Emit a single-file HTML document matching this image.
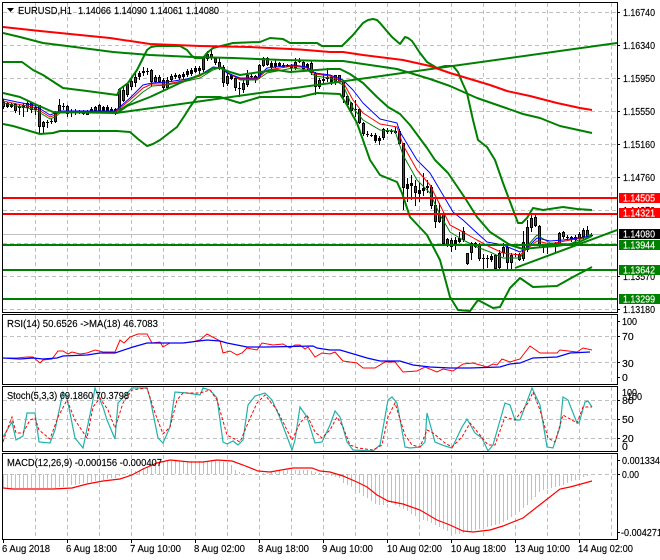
<!DOCTYPE html>
<html><head><meta charset="utf-8"><style>
html,body{margin:0;padding:0;background:#fff;width:660px;height:560px;overflow:hidden}
svg{display:block}
text{font-family:"Liberation Sans",sans-serif;font-size:10.5px;fill:#000;stroke:#000;stroke-width:.15px}
text.w{fill:#fff;stroke:#fff}
</style></head><body>
<svg width="660" height="560" viewBox="0 0 660 560" xmlns="http://www.w3.org/2000/svg">
<defs><clipPath id="c1"><rect x="3" y="3" width="614" height="309"/></clipPath></defs>
<!-- grid -->
<g stroke="#c0c0c0" stroke-width="1" stroke-dasharray="4 3" fill="none" shape-rendering="crispEdges">
<path d="M35.5 3V312M67.5 3V312M99.5 3V312M131.5 3V312M163.5 3V312M195.5 3V312M227.5 3V312M259.5 3V312M291.5 3V312M323.5 3V312M355.5 3V312M387.5 3V312M419.5 3V312M451.5 3V312M483.5 3V312M515.5 3V312M547.5 3V312M579.5 3V312M611.5 3V312"/>
<path d="M3 12.5H617M3 45.5H617M3 78.5H617M3 111.5H617M3 144.5H617M3 177.5H617M3 210.5H617M3 243.5H617M3 276.5H617M3 309.5H617"/>
<path d="M35.5 315V384M67.5 315V384M99.5 315V384M131.5 315V384M163.5 315V384M195.5 315V384M227.5 315V384M259.5 315V384M291.5 315V384M323.5 315V384M355.5 315V384M387.5 315V384M419.5 315V384M451.5 315V384M483.5 315V384M515.5 315V384M547.5 315V384M579.5 315V384M611.5 315V384"/>
<path d="M3 336.5H617M3 362.5H617"/>
<path d="M35.5 387V451M67.5 387V451M99.5 387V451M131.5 387V451M163.5 387V451M195.5 387V451M227.5 387V451M259.5 387V451M291.5 387V451M323.5 387V451M355.5 387V451M387.5 387V451M419.5 387V451M451.5 387V451M483.5 387V451M515.5 387V451M547.5 387V451M579.5 387V451M611.5 387V451"/>
<path d="M3 400.5H617M3 419.5H617M3 438.5H617"/>
<path d="M35.5 455V539M67.5 455V539M99.5 455V539M131.5 455V539M163.5 455V539M195.5 455V539M227.5 455V539M259.5 455V539M291.5 455V539M323.5 455V539M355.5 455V539M387.5 455V539M419.5 455V539M451.5 455V539M483.5 455V539M515.5 455V539M547.5 455V539M579.5 455V539M611.5 455V539"/>
<path d="M3 474.5H617"/>
</g>
<!-- current price -->
<path d="M3 234.5H617" stroke="#c0c0c0" stroke-width="1" shape-rendering="crispEdges"/>
<g clip-path="url(#c1)" shape-rendering="crispEdges" fill="none">
<!-- wicks -->
<path stroke="#000" stroke-width="1" d="M3.5 99V109M7.5 102V108M11.5 103V108M15.5 103V113M19.5 104V115M23.5 103V117M27.5 100V112M31.5 102V113M35.5 105V115M39.5 105V133M43.5 121V133M47.5 120V128M51.5 119V124M55.5 111V123M59.5 99V113M63.5 103V110M67.5 105V117M71.5 109V117M75.5 109V115M79.5 110V114M83.5 110V115M87.5 110V115M91.5 107V113M95.5 106V113M99.5 104V112M103.5 106V113M107.5 105V112M111.5 107V112M115.5 108V115M119.5 88V112M123.5 86V102M127.5 83V97M131.5 78V90M135.5 73V87M139.5 71V80M143.5 67V76M147.5 68V75M151.5 69V87M155.5 75V83M159.5 75V83M163.5 78V90M167.5 77V90M171.5 74V82M175.5 73V79M179.5 74V80M183.5 72V79M187.5 69V77M191.5 68V76M195.5 66V73M199.5 66V74M203.5 57V72M207.5 51V61M211.5 50V60M215.5 57V65M219.5 57V70M223.5 65V87M227.5 73V86M231.5 74V80M235.5 77V91M239.5 82V97M243.5 78V93M247.5 70V87M251.5 74V80M255.5 75V83M259.5 64V79M263.5 57V67M267.5 57V66M271.5 61V70M275.5 60V68M279.5 62V67M283.5 63V68M287.5 64V67M291.5 64V73M295.5 58V70M299.5 58V63M303.5 60V71M307.5 63V71M311.5 61V75M315.5 72V95M319.5 78V89M323.5 75V85M327.5 68V82M331.5 75V85M335.5 75V85M339.5 75V83M343.5 80V103M347.5 95V106M351.5 102V112M355.5 100V117M359.5 108V124M363.5 122V136M367.5 131V137M371.5 133V137M375.5 133V143M379.5 136V145M383.5 128V140M387.5 128V134M391.5 129V134M395.5 127V134M399.5 129V145M403.5 143V210M407.5 178V202M411.5 175V200M415.5 180V206M419.5 183V202M423.5 173V196M427.5 180V193M431.5 185V209M435.5 199V228M439.5 203V223M443.5 212V246M447.5 238V247M451.5 238V252M455.5 237V250M459.5 232V243M463.5 227V242M467.5 253V265M471.5 242V260M475.5 242V248M479.5 243V261M483.5 254V269M487.5 255V268M491.5 254V262M495.5 254V271M499.5 250V269M503.5 243V257M507.5 246V269M511.5 253V271M515.5 253V257M519.5 253V261M523.5 231V261M527.5 220V252M531.5 213V232M535.5 214V227M539.5 225V247M543.5 244V253M547.5 243V254M551.5 243V247M555.5 242V253M559.5 232V245M563.5 231V239M567.5 235V240M571.5 236V242M575.5 235V245M579.5 232V242M583.5 228V239M587.5 226V239M591.5 233V237"/>
<!-- bodies -->
<path stroke="#000" stroke-width="3" d="M3.5 102V107M7.5 103V107M11.5 104V107M15.5 104V111M19.5 106V108M23.5 105V108M27.5 103V108M31.5 103V110M35.5 107V110M39.5 105V127M43.5 122V127M47.5 122V123M51.5 121V122M55.5 113V122M59.5 105V112M63.5 106V107M67.5 106V114M71.5 111V113M75.5 111V113M79.5 112V113M83.5 112V114M87.5 111V115M91.5 109V111M95.5 107V111M99.5 105V111M103.5 107V111M107.5 107V111M111.5 109V111M115.5 109V113M119.5 89V110M123.5 90V101M127.5 84V95M131.5 81V87M135.5 77V83M139.5 73V77M143.5 71V73M147.5 71V72M151.5 70V82M155.5 77V82M159.5 77V82M163.5 80V88M167.5 80V88M171.5 76V80M175.5 75V77M179.5 75V78M183.5 74V77M187.5 71V75M191.5 70V74M195.5 68V72M199.5 68V71M203.5 58V70M207.5 54V59M211.5 54V58M215.5 58V63M219.5 62V68M223.5 67V83M227.5 76V84M231.5 75V79M235.5 78V88M239.5 88V89M243.5 83V90M247.5 75V85M251.5 76V77M255.5 76V78M259.5 65V77M263.5 58V66M267.5 58V65M271.5 63V67M275.5 63V67M279.5 63V66M283.5 65V67M287.5 65V67M291.5 66V68M295.5 62V68M299.5 61V62M303.5 62V69M307.5 64V68M311.5 63V73M315.5 73V87M319.5 80V87M323.5 79V81M327.5 77V79M331.5 77V83M335.5 75V83M339.5 75V82M343.5 81V97M347.5 96V105M351.5 103V111M355.5 109V110M359.5 109V123M363.5 123V134M367.5 134V135M371.5 135V136M375.5 135V141M379.5 138V141M383.5 129V138M387.5 131V132M391.5 131V132M395.5 131V133M399.5 131V144M403.5 143V188M407.5 184V189M411.5 183V186M415.5 186V193M419.5 190V194M423.5 188V191M427.5 186V188M431.5 187V206M435.5 205V222M439.5 213V222M443.5 213V244M447.5 239V245M451.5 240V247M455.5 240V246M459.5 238V242M463.5 231V240M467.5 253V264M471.5 243V253M475.5 243V247M479.5 245V259M483.5 258V259M487.5 258V259M491.5 256V260M495.5 255V269M499.5 253V268M503.5 247V253M507.5 247V263M511.5 255V263M515.5 254V255M519.5 254V260M523.5 242V259M527.5 227V250M531.5 218V228M535.5 217V226M539.5 226V245M543.5 245V247M547.5 244V247M551.5 244V246M555.5 243V246M559.5 233V244M563.5 232V237M567.5 237V238M571.5 237V240M575.5 237V240M579.5 234V239M583.5 230V237M587.5 230V237M591.5 235V236"/>
<!-- inner red -->
<path stroke="#f00" stroke-width="1" d="M15.5 105V110M31.5 104V109M39.5 106V126M43.5 123V126M67.5 107V113M151.5 71V81M155.5 78V81M163.5 81V87M179.5 76V77M211.5 55V57M215.5 59V62M219.5 63V67M223.5 68V82M235.5 79V87M255.5 77V78M267.5 59V64M303.5 63V68M311.5 64V72M315.5 74V86M343.5 82V96M347.5 97V104M351.5 104V110M359.5 110V122M363.5 124V133M399.5 132V143M403.5 144V187M415.5 187V192M431.5 188V205M435.5 206V221M443.5 214V243M451.5 241V246M475.5 244V246M479.5 246V258M495.5 256V268M507.5 248V262M519.5 255V259M535.5 218V225M539.5 227V244M563.5 233V236M587.5 231V236"/>
<!-- inner green -->
<path stroke="#008000" stroke-width="1" d="M3.5 103V106M27.5 104V107M55.5 114V121M59.5 106V111M87.5 112V114M95.5 108V110M99.5 106V110M119.5 90V109M123.5 91V100M127.5 85V94M131.5 82V86M135.5 78V82M159.5 78V81M167.5 81V87M171.5 77V79M203.5 59V69M207.5 55V58M227.5 77V83M243.5 84V89M247.5 76V84M259.5 66V76M263.5 59V65M295.5 63V67M319.5 81V86M335.5 76V82M339.5 76V81M383.5 130V137M439.5 214V221M447.5 240V244M463.5 232V239M467.5 254V263M471.5 244V252M499.5 254V267M503.5 248V252M511.5 256V262M523.5 243V258M527.5 228V249M531.5 219V227M559.5 234V243M579.5 235V238M583.5 231V236"/>
</g>
<g clip-path="url(#c1)" fill="none" stroke-linejoin="round">
<!-- MAs thin -->
<polyline stroke="#008000" stroke-width="1" points="3,103 17,106 33,109 42,114 50,119 55,117 60,113 115,112 122,108 130,103 143,92 152,86 167,85 187,81 200,78 213,70 222,67 227,72 240,80 257,80 267,73 293,68 307,70 315,76 330,78 343,85 353,108 363,120 380,130 395,131 403,155 417,180 430,193 440,215 450,232 463,240 477,247 490,252 503,258 520,258 528,245 537,235 550,243 570,244 592,234"/>
<polyline stroke="#f00" stroke-width="1" points="3,101 17,104 33,107 42,112 50,117 55,115 60,112 115,112 130,100 143,88 152,84 167,84 187,80 200,76 213,68 222,68 227,73 240,79 257,79 267,70 293,66 307,68 315,74 330,76 343,82 353,100 363,113 380,124 397,127 403,145 417,170 430,185 440,205 450,225 463,232 477,240 490,247 503,253 520,255 528,248 537,241 550,244 565,241 592,236"/>
<polyline stroke="#00f" stroke-width="1" points="3,99 17,102 33,105 42,110 50,115 55,113 60,111 115,111 130,98 143,85 152,83 167,82 187,79 200,75 213,67 222,68 227,73 240,78 257,78 267,68 293,65 307,67 315,73 330,75 343,80 353,90 363,103 380,119 397,123 400,132 417,160 430,173 443,195 453,212 463,220 477,233 487,242 503,245 520,252 530,245 537,238 550,241 563,240 592,236"/>
<!-- thick -->
<g stroke="#008000" stroke-width="2">
<polyline points="3,33 20,37 43,43 67,46 113,52 150,55 193,57 233,58 283,60 330,61 343,61 363,64 397,69 430,79 450,86 477,98 503,107 523,114 540,118 560,126 592,133"/>
<polyline points="116,113 617,43"/>
<polyline points="515,268 617,230"/>
<polyline points="3,62 22,62 33,70 43,75 63,88 87,91 117,95 120,89 128,83 137,70 142,60 147,50 151,47 157,46 180,46 187,50 192,56 195,58 203,58 207,53 213,48 233,43 260,42 270,38 283,39 290,43 317,43 322,46 342,46 347,41 353,35 358,29 363,23 368,20 373,19 377,20 380,23 392,37 400,44 405,37 408,38 412,41 420,53 427,62 437,68 445,66 453,66 458,72 462,82 467,93 473,120 478,140 487,147 495,160 503,183 512,207 518,223 522,223 527,218 533,208 543,210 563,207 577,209 592,210"/>
<polyline points="3,93 20,97 37,105 53,112 117,113 127,106 150,97 180,83 207,72 213,68 220,68 230,72 240,75 260,72 277,70 290,72 330,69 340,69 350,74 363,83 377,97 388,107 400,114 410,125 427,148 435,160 448,173 465,198 477,217 490,232 510,245 523,249 543,247 557,246 577,243 592,236"/>
<polyline points="3,124 13,126 40,134 53,133 60,131 117,131 130,132 138,139 147,146 153,144 160,140 177,127 185,115 190,107 197,97 220,97 240,103 260,97 300,97 317,93 340,94 347,105 357,123 370,160 380,175 397,182 402,193 410,217 427,235 440,260 450,297 458,310 470,311 478,300 493,308 500,307 510,288 520,278 533,287 557,286 573,277 592,267"/>
</g>
<polyline stroke="#f00" stroke-width="2" points="3,27 40,31 80,35 110,38 150,44 200,46 250,47 300,49.500 330,52 343,52 363,55 387,58 403,60 430,66 450,73 470,79 490,85 507,91 530,96 557,103 580,108 592,110"/>
</g>
<!-- levels -->
<g shape-rendering="crispEdges">
<rect x="3" y="197" width="614" height="2" fill="#f00"/>
<rect x="3" y="213" width="614" height="2" fill="#f00"/>
<rect x="3" y="244" width="614" height="2" fill="#008000"/>
<rect x="3" y="269" width="614" height="2" fill="#008000"/>
<rect x="3" y="298" width="614" height="2" fill="#008000"/>
</g>
<!-- RSI -->
<polyline fill="none" stroke="#f00" stroke-width="1" points="3,358 10,358 17,358 27,357 33,357 40,363 43,360 52,359 58,351 63,351 68,354 72,352 80,354 87,353 95,350 103,352 115,352 120,340 124,343 130,337 138,334 147,334 152,343 160,342 163,347 170,343 183,343 192,342 200,340 207,334 220,341 223,353 230,351 237,355 242,353 247,348 257,350 262,343 273,345 283,344 290,348 295,345 300,345 305,349 308,347 315,357 322,353 330,354 335,352 343,361 350,362 357,363 363,368 375,368 385,362 395,362 403,372 417,371 425,367 437,372 443,369 453,371 463,364 473,363 487,367 493,364 497,365 502,359 510,362 520,359 530,346 540,353 557,353 560,350 577,352 583,348 592,350"/>
<polyline fill="none" stroke="#00f" stroke-width="1.2" points="3,358 20,359 33,358 43,359 57,358 63,356 87,355 100,353 115,353 133,347 147,343 183,343 207,340 220,341 227,343 247,347 267,347 313,346 317,348 330,350 340,350 357,355 367,358 380,361 400,361 413,365 430,367 450,368 470,368 500,367 510,364 520,363 533,358 557,357 570,353 590,352"/>
<!-- Stoch -->
<polyline fill="none" stroke="#20b2aa" stroke-width="1.2" points="3,437 12,422 16,440 23,436 27,413 35,413 39,442 50,443 55,430 63,392 67,398 75,438 83,448 92,405 95,388 103,407 107,420 115,439 118,403 132,388 147,388 150,398 158,438 163,443 170,427 175,392 187,393 200,395 203,388 210,390 217,398 223,442 227,444 233,441 238,445 243,440 248,405 255,396 265,393 272,400 280,418 292,450 295,440 300,407 307,417 315,443 322,442 330,425 335,411 340,417 347,442 353,450 373,451 380,445 388,400 392,397 397,403 405,447 410,448 420,447 425,442 427,413 435,442 445,446 452,448 462,427 467,419 475,433 482,438 488,451 493,445 505,403 510,405 515,420 520,420 532,388 540,405 547,447 553,448 560,427 563,397 568,400 577,423 579,423 585,402 588,401 592,407"/>
<polyline fill="none" stroke="#f00" stroke-width="1" stroke-dasharray="3 2" points="3,442 7,430 12,417 16,433 23,433 30,420 35,418 39,430 50,439 58,417 67,400 75,420 87,438 93,407 100,398 108,410 115,428 123,403 132,390 147,388 155,413 163,434 170,427 177,400 183,393 200,393 210,390 217,400 227,435 240,442 248,423 257,403 265,395 277,410 292,440 300,423 307,415 315,432 322,438 330,430 337,417 343,427 350,445 358,448 373,450 382,445 388,417 395,403 405,435 412,445 420,447 427,430 433,433 445,443 452,447 462,437 470,423 480,435 488,445 495,445 505,417 515,420 528,403 533,392 540,410 548,438 555,442 563,415 577,423 583,407 592,407"/>
<!-- MACD hist -->
<path fill="none" stroke="#c0c0c0" stroke-width="1" shape-rendering="crispEdges" d="M3.5 474V488M7.5 474V488M11.5 474V488M15.5 474V488M19.500 474V488M23.5 474V488M27.5 474V488M31.5 474V488M35.5 474V488M39.5 474V488M43.5 474V488M47.5 474V488M51.5 474V488M55.5 474V488M59.5 474V487M63.5 474V487M67.5 474V486M71.5 474V485M75.5 474V485M79.5 474V484M83.5 474V483M87.5 474V483M91.5 474V482M95.5 474V481M99.5 474V481M103.5 474V480M107.5 474V479M111.5 474V478M115.5 474V478M119.5 474V476M123.5 474V475M127.5 473V474M131.5 473V474M135.5 471V474M139.5 470V474M143.5 468V474M147.5 467V474M151.5 465V474M155.5 464V474M159.5 463V474M163.5 462V474M167.5 461V474M171.5 461V474M175.5 461V474M179.5 461V474M183.5 461V474M187.5 461V474M191.5 461V474M195.5 461V474M199.5 461V474M203.5 461V474M207.5 461V474M211.5 461V474M215.5 461V474M219.5 461V474M223.5 462V474M227.5 463V474M231.5 465V474M235.5 470V474M239.5 472V474M243.5 473V474M263.5 473V474M267.5 473V474M271.5 472V474M275.5 472V474M279.5 471V474M283.5 471V474M287.5 470V474M291.5 470V474M295.5 470V474M299.5 470V474M303.5 470V474M307.5 470V474M311.5 471V474M315.5 472V474M319.5 473V474M323.5 473V474M331.5 474V476M335.5 474V477M339.5 474V478M343.5 474V483M347.5 474V485M351.5 474V487M355.5 474V490M359.5 474V493M363.5 474V496M367.5 474V498M371.5 474V501M375.5 474V504M379.5 474V505M383.5 474V505M387.5 474V503M391.5 474V503M395.5 474V505M399.5 474V507M403.5 474V509M407.5 474V511M411.5 474V514M415.5 474V516M419.5 474V518M423.5 474V520M427.5 474V521M431.5 474V523M435.5 474V525M439.5 474V527M443.5 474V529M447.5 474V531M451.5 474V533M455.5 474V534M459.5 474V534M463.5 474V533M467.5 474V532M471.5 474V531M475.5 474V530M479.5 474V529M483.5 474V528M487.5 474V527M491.5 474V526M495.5 474V525M499.5 474V524M503.5 474V522M507.5 474V520M511.5 474V517M515.5 474V515M519.5 474V512M523.5 474V508M527.5 474V505M531.5 474V500M535.5 474V497M539.5 474V492M543.5 474V490M547.5 474V489M551.5 474V488M555.5 474V487M559.5 474V486M563.5 474V485M567.5 474V483M571.5 474V481M575.5 474V480M579.5 474V478M583.5 474V477M587.5 474V476M591.5 474V475"/>
<polyline fill="none" stroke="#f00" stroke-width="1.2" points="3,488 13,489 37,489 53,489 72,488 87,484 103,481 120,479 132,475 143,469 157,463 170,460 180,461 190,462 203,462 217,460 232,461 243,465 258,471 270,472 287,469 293,468 312,468 320,471 330,472 343,476 357,482 367,487 377,495 388,501 403,504 420,510 437,520 450,525 463,531 473,532 490,530 503,526 523,518 537,507 560,489 570,487 592,481"/>
<!-- frames -->
<g fill="none" stroke="#000" stroke-width="1" shape-rendering="crispEdges">
<rect x="2.5" y="2.5" width="615" height="310"/>
<rect x="2.5" y="314.5" width="615" height="70"/>
<rect x="2.5" y="386.5" width="615" height="65"/>
<rect x="2.5" y="453.5" width="615" height="86"/>
<path d="M617 12.500H620M617 45.5H620M617 78.5H620M617 111.5H620M617 144.5H620M617 177.5H620M617 309.5H620M617 276.5H620M617 321.5H620M617 336.5H620M617 362.5H620M617 377.5H620M617 400.5H620M617 419.5H620M617 438.5H620M617 460.5H620M617 474.5H620M617 532.5H620"/>
<path d="M3.5 539V543M67.5 539V543M131.5 539V543M195.5 539V543M259.5 539V543M323.5 539V543M387.5 539V543M451.5 539V543M515.5 539V543M579.5 539V543"/>
</g>
<!-- header -->
<path d="M7 8H14L10.500 12Z" fill="#000"/>
<text x="18" y="14" textLength="54" lengthAdjust="spacingAndGlyphs">EURUSD,H1</text>
<text x="78" y="14" textLength="33" lengthAdjust="spacingAndGlyphs">1.14066</text>
<text x="114" y="14" textLength="33" lengthAdjust="spacingAndGlyphs">1.14090</text>
<text x="150" y="14" textLength="33" lengthAdjust="spacingAndGlyphs">1.14061</text>
<text x="186" y="14" textLength="33" lengthAdjust="spacingAndGlyphs">1.14080</text>
<text x="7" y="327" textLength="151" lengthAdjust="spacingAndGlyphs">RSI(14) 50.6526  -&gt;MA(18) 46.7083</text>
<text x="7" y="399" textLength="122" lengthAdjust="spacingAndGlyphs">Stoch(5,3,3) 69.1860 70.3798</text>
<text x="7" y="466" textLength="155" lengthAdjust="spacingAndGlyphs">MACD(12,26,9) -0.000156 -0.000407</text>
<!-- y labels -->
<g>
<text x="623" y="16" textLength="32" lengthAdjust="spacingAndGlyphs">1.16740</text>
<text x="623" y="49" textLength="32" lengthAdjust="spacingAndGlyphs">1.16340</text>
<text x="623" y="82" textLength="32" lengthAdjust="spacingAndGlyphs">1.15950</text>
<text x="623" y="115" textLength="32" lengthAdjust="spacingAndGlyphs">1.15550</text>
<text x="623" y="148" textLength="32" lengthAdjust="spacingAndGlyphs">1.15160</text>
<text x="623" y="181" textLength="32" lengthAdjust="spacingAndGlyphs">1.14760</text>
<text x="623" y="214" textLength="32" lengthAdjust="spacingAndGlyphs">1.14370</text>
<text x="623" y="280" textLength="32" lengthAdjust="spacingAndGlyphs">1.13570</text>
<text x="623" y="313" textLength="32" lengthAdjust="spacingAndGlyphs">1.13180</text>
</g>
<g shape-rendering="crispEdges">
<rect x="619" y="193" width="41" height="10" fill="#f00"/>
<rect x="619" y="208" width="41" height="10" fill="#f00"/>
<rect x="619" y="229" width="41" height="10" fill="#000"/>
<rect x="619" y="240" width="41" height="10" fill="#008000"/>
<rect x="619" y="265" width="41" height="10" fill="#008000"/>
<rect x="619" y="294" width="41" height="10" fill="#008000"/>
</g>
<text class="w" x="623" y="201.5" textLength="32" lengthAdjust="spacingAndGlyphs">1.14505</text>
<text class="w" x="623" y="216.5" textLength="32" lengthAdjust="spacingAndGlyphs">1.14321</text>
<text class="w" x="623" y="237.5" textLength="32" lengthAdjust="spacingAndGlyphs">1.14080</text>
<text class="w" x="623" y="248.5" textLength="32" lengthAdjust="spacingAndGlyphs">1.13944</text>
<text class="w" x="623" y="273.5" textLength="32" lengthAdjust="spacingAndGlyphs">1.13642</text>
<text class="w" x="623" y="302.5" textLength="32" lengthAdjust="spacingAndGlyphs">1.13299</text>
<!-- sub pane labels -->
<text x="622" y="325" textLength="15" lengthAdjust="spacingAndGlyphs">100</text>
<text x="622" y="340">70</text>
<text x="622" y="367">30</text>
<text x="622" y="381">0</text>
<text x="622" y="396" textLength="15" lengthAdjust="spacingAndGlyphs">100</text>
<text x="627" y="400" textLength="15" lengthAdjust="spacingAndGlyphs">100</text>
<text x="622" y="404">80</text>
<text x="622" y="423">50</text>
<text x="622" y="442">20</text>
<text x="622" y="450">0</text>
<text x="622" y="464" textLength="38" lengthAdjust="spacingAndGlyphs">0.001334</text>
<text x="622" y="478" textLength="17" lengthAdjust="spacingAndGlyphs">0.00</text>
<text x="621" y="536" textLength="41" lengthAdjust="spacingAndGlyphs">-0.004271</text>
<!-- x labels -->
<text x="2" y="552" textLength="48" lengthAdjust="spacingAndGlyphs">6 Aug 2018</text>
<text x="66" y="552" textLength="51" lengthAdjust="spacingAndGlyphs">6 Aug 18:00</text>
<text x="130" y="552" textLength="51" lengthAdjust="spacingAndGlyphs">7 Aug 10:00</text>
<text x="194" y="552" textLength="51" lengthAdjust="spacingAndGlyphs">8 Aug 02:00</text>
<text x="258" y="552" textLength="51" lengthAdjust="spacingAndGlyphs">8 Aug 18:00</text>
<text x="322" y="552" textLength="51" lengthAdjust="spacingAndGlyphs">9 Aug 10:00</text>
<text x="387" y="552" textLength="55" lengthAdjust="spacingAndGlyphs">10 Aug 02:00</text>
<text x="451" y="552" textLength="55" lengthAdjust="spacingAndGlyphs">10 Aug 18:00</text>
<text x="515" y="552" textLength="55" lengthAdjust="spacingAndGlyphs">13 Aug 10:00</text>
<text x="578" y="552" textLength="55" lengthAdjust="spacingAndGlyphs">14 Aug 02:00</text>
</svg>
</body></html>
